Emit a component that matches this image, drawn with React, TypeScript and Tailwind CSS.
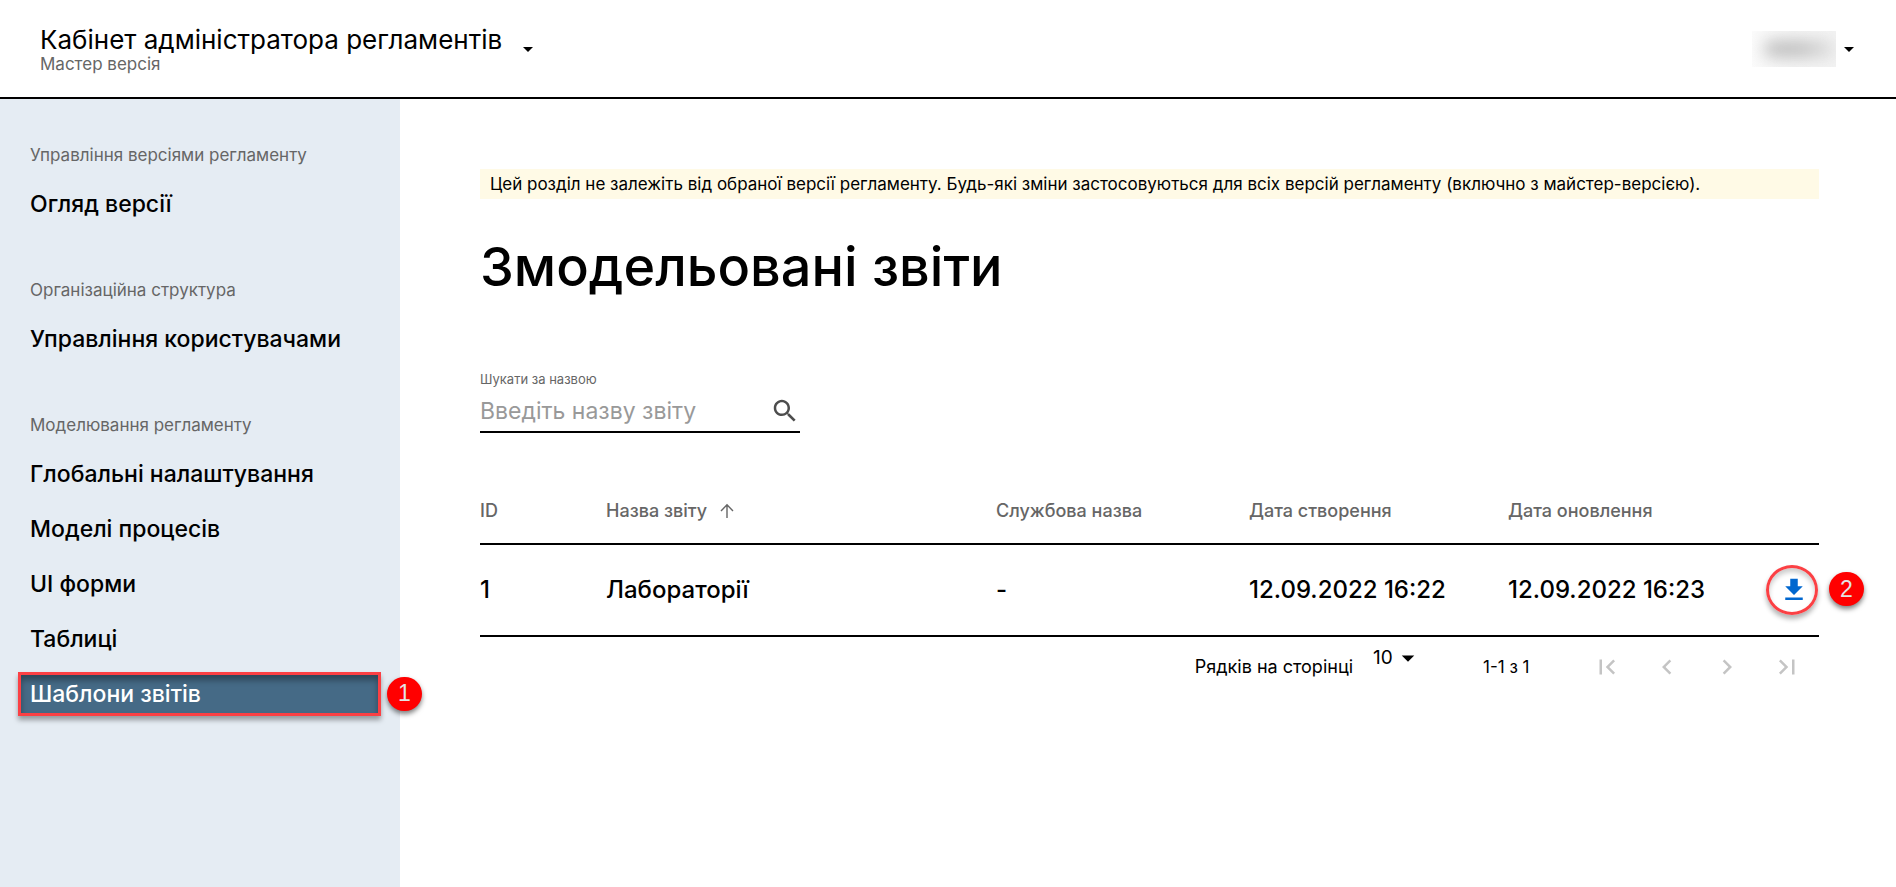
import type { ReactNode } from "react";

type NavGroup = { title: string; items: string[] };

const groups: NavGroup[] = [
  { title: "Управління версіями регламенту", items: ["Огляд версії"] },
  { title: "Організаційна структура", items: ["Управління користувачами"] },
  {
    title: "Моделювання регламенту",
    items: ["Глобальні налаштування", "Моделі процесів", "UI форми", "Таблиці", "Шаблони звітів"],
  },
];

const ACTIVE_ITEM = "Шаблони звітів";

function Icon({ d, className }: { d: string; className: string }) {
  return (
    <svg viewBox="0 0 24 24" fill="currentColor" aria-hidden="true" className={className}>
      <path d={d} />
    </svg>
  );
}

const dropDownPath = "M7 10l5 5 5-5z";

function Marker({ children, className }: { children: ReactNode; className: string }) {
  return (
    <span
      className={`absolute flex h-[34px] w-[35px] items-center justify-center rounded-full bg-[#ff0000] font-['Liberation_Sans',sans-serif] text-[23px] leading-none font-normal text-[#e4e4e4] shadow-[0_3px_5px_rgba(0,0,0,0.5)] ${className}`}
    >
      {children}
    </span>
  );
}

function Header() {
  return (
    <header className="flex h-[99px] items-center justify-between border-b-2 border-black pl-10 pr-[35px]">
      <div className="flex items-center gap-[14px]">
        <div>
          <div className="text-[26px] leading-[30px]">Кабінет адміністратора регламентів</div>
          <div className="text-[17px] leading-[18px] text-[#666]">Мастер версія</div>
        </div>
        <button type="button" aria-label="Обрати версію" className="cursor-pointer">
          <Icon d={dropDownPath} className="size-6" />
        </button>
      </div>
      <button type="button" aria-label="Меню користувача" className="flex cursor-pointer items-center gap-px">
        <span className="block h-9 w-[84px] overflow-hidden bg-gradient-to-r from-[#fbfbfb] via-[#f5f5f5] to-[#f3f3f3]">
          <span className="mt-[10px] ml-3 block h-4 w-[72px] rounded-full bg-gradient-to-r from-[#bcbcbc] via-[#bcbcbc] to-[#e4e4e4] blur-[8px]" />
        </span>
        <Icon d={dropDownPath} className="size-6" />
      </button>
    </header>
  );
}

function Sidebar() {
  return (
    <nav className="w-[400px] shrink-0 bg-[#e5ecf3] px-[18px] pt-11">
      {groups.map((group) => (
        <section key={group.title} className="mb-[47px]">
          <h2 className="px-3 text-[17px] leading-6 text-[#666]">{group.title}</h2>
          <ul className="mt-[9px]">
            {group.items.map((item) => (
              <li key={item} className="relative flex h-[55px] items-center">
                {item === ACTIVE_ITEM ? (
                  <>
                    <a
                      href="#"
                      aria-current="page"
                      className="block h-11 w-[363px] border-[3px] border-[#fb4044] bg-[#456a86] px-[9px] text-[23px] leading-[38px] font-medium text-white shadow-[0_4px_5px_rgba(0,0,0,0.35),inset_0_5px_6px_rgba(0,0,0,0.35)]"
                    >
                      {item}
                    </a>
                    <Marker className="-right-[40px]">1</Marker>
                  </>
                ) : (
                  <a href="#" className="block w-full px-3 text-[23px] leading-[38px] font-medium">
                    {item}
                  </a>
                )}
              </li>
            ))}
          </ul>
        </section>
      ))}
    </nav>
  );
}

function Search() {
  return (
    <div className="mt-[72px] w-80">
      <label htmlFor="report-search" className="block text-[13px] leading-4 text-[#666]">
        Шукати за назвою
      </label>
      <div className="mt-1 flex h-[42px] items-center border-b-2 border-black">
        <input
          id="report-search"
          type="text"
          placeholder="Введіть назву звіту"
          className="min-w-0 flex-1 text-[23px] outline-none placeholder:text-[#999]"
        />
        <Icon
          className="size-[30px] text-[#4d4d4d]"
          d="M15.5 14h-.79l-.28-.27C15.41 12.59 16 11.11 16 9.5 16 5.91 13.09 3 9.5 3S3 5.91 3 9.5 5.91 16 9.5 16c1.61 0 3.09-.59 4.23-1.57l.27.28v.79l5 4.99L20.49 19l-4.99-5zm-6 0C7.01 14 5 11.99 5 9.5S7.01 5 9.5 5 14 7.01 14 9.5 11.99 14 9.5 14z"
        />
      </div>
    </div>
  );
}

function ReportTable() {
  return (
    <table className="mt-11 w-full table-fixed text-left">
      <colgroup>
        <col className="w-[126px]" />
        <col className="w-[390px]" />
        <col className="w-[253px]" />
        <col className="w-[259px]" />
        <col />
        <col className="w-[60px]" />
      </colgroup>
      <thead>
        <tr className="h-[67px] border-b-2 border-black text-lg text-[#666] [&>th]:pt-0.5 [&>th]:font-medium">
          <th scope="col">ID</th>
          <th scope="col" aria-sort="ascending">
            <button type="button" className="flex cursor-pointer items-center gap-3">
              Назва звіту
              <svg viewBox="0 0 16 16" fill="none" stroke="currentColor" strokeWidth="1.4" aria-hidden="true" className="size-4">
                <path d="M8 15V2M2 8l6-6.2L14 8" />
              </svg>
            </button>
          </th>
          <th scope="col">Службова назва</th>
          <th scope="col">Дата створення</th>
          <th scope="col">Дата оновлення</th>
          <th scope="col" aria-label="Дії" />
        </tr>
      </thead>
      <tbody>
        <tr className="h-[92px] border-b-2 border-black text-2xl font-medium">
          <td>1</td>
          <td>Лабораторії</td>
          <td>-</td>
          <td>12.09.2022 16:22</td>
          <td>12.09.2022 16:23</td>
          <td>
            <div className="relative flex justify-end pr-px">
              <button
                type="button"
                aria-label="Завантажити"
                className="flex h-[50px] w-[52px] cursor-pointer items-center justify-center rounded-[50%] border-[3px] border-[#fb4044] pl-1 text-[#0067cf] shadow-[0_4px_5px_rgba(0,0,0,0.3),inset_0_4px_5px_rgba(0,0,0,0.2)]"
              >
                <Icon className="size-[30px]" d="M19 9h-4V3H9v6H5l7 7 7-7zM5 18v2h14v-2H5z" />
              </button>
              <Marker className="top-[7px] -right-[45px]">2</Marker>
            </div>
          </td>
        </tr>
      </tbody>
    </table>
  );
}

const pageButtons = [
  { label: "Перша сторінка", d: "M18.41 16.59L13.82 12l4.59-4.59L17 6l-6 6 6 6zM6 6h2v12H6z" },
  { label: "Попередня сторінка", d: "M15.41 7.41L14 6l-6 6 6 6 1.41-1.41L10.83 12z" },
  { label: "Наступна сторінка", d: "M10 6L8.59 7.41 13.17 12l-4.58 4.59L10 18l6-6z" },
  { label: "Остання сторінка", d: "M5.59 7.41L10.18 12l-4.59 4.59L7 18l6-6-6-6zM16 6h2v12h-2z" },
];

function Pagination() {
  return (
    <div className="flex h-[60px] items-center justify-end pr-0.5 text-lg">
      <label htmlFor="rows-per-page">Рядків на сторінці</label>
      <div className="relative mb-[18px] ml-5 flex items-center">
        <select id="rows-per-page" defaultValue="10" className="w-12 appearance-none text-[19px] leading-6 outline-none">
          <option>10</option>
          <option>25</option>
          <option>50</option>
        </select>
        <Icon d={dropDownPath} className="pointer-events-none absolute left-5 size-[30px]" />
      </div>
      <span className="ml-[62px] w-[94px] text-[17px]">1-1 з 1</span>
      {pageButtons.map(({ label, d }) => (
        <button key={label} type="button" disabled aria-label={label} className="flex size-[60px] items-center justify-center text-[#c4c4c4]">
          <Icon d={d} className="size-[30px]" />
        </button>
      ))}
    </div>
  );
}

export default function App() {
  return (
    <div className="flex min-h-screen flex-col bg-white font-['Inter','Noto_Sans',sans-serif] text-black">
      <Header />
      <div className="flex flex-1">
        <Sidebar />
        <main className="min-w-0 flex-1 pt-[70px] pr-[77px] pl-20">
          <p className="bg-[#fffae6] px-[10px] text-[17px] leading-[30px]">
            Цей розділ не залежіть від обраної версії регламенту. Будь-які зміни застосовуються для всіх версій регламенту (включно з майстер-версією).
          </p>
          <h1 className="mt-9 text-[54px] leading-[64px] font-medium">Змодельовані звіти</h1>
          <Search />
          <ReportTable />
          <Pagination />
        </main>
      </div>
    </div>
  );
}
